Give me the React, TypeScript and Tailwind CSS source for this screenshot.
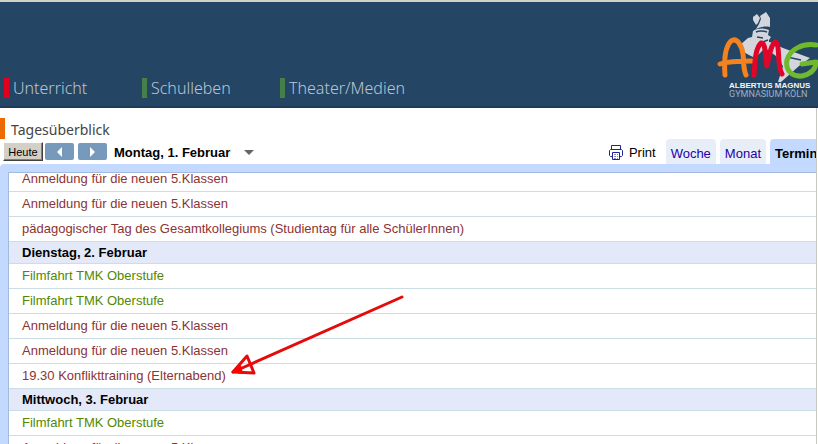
import React from 'react';

type CalendarEvent = {
  title: string;
  color: 'red' | 'green';
};

type Day = {
  label: string | null;
  events: CalendarEvent[];
};

const navItems = [
  { label: 'Unterricht', marker: 'bg-[#e2001f]' },
  { label: 'Schulleben', marker: 'bg-[#45804a]' },
  { label: 'Theater/Medien', marker: 'bg-[#45804a]' },
];

const days: Day[] = [
  {
    label: null,
    events: [
      { title: 'Anmeldung für die neuen 5.Klassen', color: 'red' },
      { title: 'Anmeldung für die neuen 5.Klassen', color: 'red' },
      {
        title: 'pädagogischer Tag des Gesamtkollegiums (Studientag für alle SchülerInnen)',
        color: 'red',
      },
    ],
  },
  {
    label: 'Dienstag, 2. Februar',
    events: [
      { title: 'Filmfahrt TMK Oberstufe', color: 'green' },
      { title: 'Filmfahrt TMK Oberstufe', color: 'green' },
      { title: 'Anmeldung für die neuen 5.Klassen', color: 'red' },
      { title: 'Anmeldung für die neuen 5.Klassen', color: 'red' },
      { title: '19.30 Konflikttraining (Elternabend)', color: 'red' },
    ],
  },
  {
    label: 'Mittwoch, 3. Februar',
    events: [
      { title: 'Filmfahrt TMK Oberstufe', color: 'green' },
      { title: 'Anmeldung für die neuen 5.Klassen', color: 'red' },
    ],
  },
];

const Logo: React.FC = () => (
  <svg width="102" height="94" viewBox="716 8 102 94" className="shrink-0" aria-label="AMG">
    <g fill="#d3d7dd">
      <path d="M753 17 L757 14 L760 18 L758 23 L756 25 L753 20 Z" />
      <path d="M760 16 L766 12 L770 18 L770 27 C765 26 760 27 756 29 L759 24 L761 19 Z" />
      <path d="M753 31 C758 28 764 28 769 30 L768 35 L771 37 L769 40 L769 44 L762 46 L754 48 L742 53 L740 45 L748 38 L752 37 Z" />
      <path d="M740 50 L755 44 L770 42 L783 48 L810 58 L799 66 L781 82 L778 82 L783 66 L776 56 L765 48 L755 58 L749 55 Z" />
    </g>
    <path
      d="M756 32 C760 30 764 31 767 32 M757 37 L763 38 M760 43 L768 40 M787 57 L801 60"
      stroke="#254564"
      strokeWidth="1.5"
      fill="none"
    />
    <g fill="none" strokeWidth="5" strokeLinecap="round" strokeLinejoin="round">
      <path
        d="M725 75 C724 62 725 47 731 41 C737 37 742 46 743 54 C744 62 743 68 746 75 M720 64 C729 61 742 61 752 61"
        stroke="#f58220"
      />
      <path
        d="M754 75 C755 62 755 49 761 43 C766 42 765 57 767 66 C769 57 771 43 776 42 C781 48 776 64 782 74"
        stroke="#e2052a"
      />
      <path
        d="M816 45 C803 43 790 49 787 60 C785 71 793 77 802 76 C811 74 816 69 816 62 L802 64"
        stroke="#6fba2c"
      />
    </g>
    <text x="729" y="88" fontSize="8" fontWeight="700" fill="#f4f6f8" fontFamily="Liberation Sans, sans-serif">
      ALBERTUS MAGNUS
    </text>
    <text x="729" y="97" fontSize="9" fill="#9fb0c2" fontFamily="Roboto, sans-serif">
      GYMNASIUM KÖLN
    </text>
  </svg>
);

const PrinterIcon: React.FC = () => (
  <svg width="14" height="15" viewBox="0 0 14 15" fill="none" aria-hidden="true">
    <path d="M2.5 4.5 V0.5 H11.5 V4.5" stroke="#23238e" />
    <path
      d="M3 11.5 H1.5 L0.5 10.5 V5.5 L1.5 4.5 H12.5 L13.5 5.5 V10.5 L12.5 11.5 H11"
      stroke="#23238e"
    />
    <path d="M3.5 7.5 H10.5 V14.5 H3.5 Z" fill="#fff" stroke="#23238e" />
    <path d="M5 9.5 H9 M5 11.5 H9 M5 13.5 H9" stroke="#8888c4" strokeDasharray="2 1" />
  </svg>
);

const Header: React.FC = () => (
  <header className="flex items-start justify-between overflow-hidden border-t-2 border-b-2 border-t-[#d4d0c8] border-b-[#1e3a58] bg-[#254564] pt-1.5 pb-1">
    <nav className="mt-[70px] flex pl-1">
      {navItems.map((item) => (
        <a
          key={item.label}
          href="#"
          className="flex w-[138px] items-center gap-1 font-['Noto_Sans'] text-base leading-5 font-light text-[#b9c6d4]"
        >
          <span className={`h-5 w-[5px] shrink-0 ${item.marker}`} />
          {item.label}
        </a>
      ))}
    </nav>
    <Logo />
  </header>
);

const Toolbar: React.FC = () => (
  <div className="flex h-[25px] items-start justify-between pl-[3px]">
    <div className="flex items-center pt-[3px]">
      <button className="h-[19px] w-10 border border-t-white border-r-[#404040] border-b-[#404040] border-l-white bg-[#d4d0c8] text-[11px] leading-4 text-black shadow-[inset_-1px_-1px_0_#808080]">
        Heute
      </button>
      <button
        aria-label="Zurück"
        className="ml-0.5 flex h-[17px] w-[29px] items-center justify-center rounded-xs bg-[#7799bb]"
      >
        <svg width="5" height="10" viewBox="0 0 5 10">
          <path d="M5 0 V10 L0 5 Z" fill="#fff" />
        </svg>
      </button>
      <button
        aria-label="Weiter"
        className="ml-1 flex h-[17px] w-[29px] items-center justify-center rounded-xs bg-[#7799bb]"
      >
        <svg width="5" height="10" viewBox="0 0 5 10">
          <path d="M0 0 V10 L5 5 Z" fill="#fff" />
        </svg>
      </button>
      <button className="ml-[7px] flex items-center gap-3.5 pt-0.5 text-[13px] leading-4 font-bold text-black">
        Montag, 1. Februar
        <svg width="10" height="5" viewBox="0 0 10 5">
          <path d="M0 0 H10 L5 5 Z" fill="#666" />
        </svg>
      </button>
    </div>
    <div className="flex h-full items-end text-[13px]">
      <button className="mr-2.5 flex h-[25px] items-center gap-1.5 pt-0.5 text-black">
        <PrinterIcon />
        Print
      </button>
      <button className="mr-1 h-[25px] rounded-t-sm bg-[#e8eef7] px-[5px] pt-1 text-[#2200aa]">
        Woche
      </button>
      <button className="mr-1 h-[25px] rounded-t-sm bg-[#e8eef7] px-[5px] pt-1 text-[#2200aa]">
        Monat
      </button>
      <button className="h-[25px] w-[46px] overflow-hidden rounded-tl-sm bg-[#c3d9ff] pt-1 pl-[5px] text-left font-bold whitespace-nowrap text-black">
        Termin
      </button>
    </div>
  </div>
);

const Agenda: React.FC = () => (
  <div className="rounded-tl-sm bg-[#c3d9ff] pt-2 pl-2">
    <div className="border-t border-l border-[#a2bbdd] bg-white text-[13px]">
      {days.map((day, index) => (
        <section key={index}>
          {day.label && (
            <h2 className="h-[22px] border-b border-[#ccdde6] bg-[#e3e9f8] pl-[13px] leading-[21px] font-bold text-black">
              {day.label}
            </h2>
          )}
          <ul className={day.label ? '' : '-mt-1.5'}>
            {day.events.map((event, i) => (
              <li
                key={i}
                className={`h-[25px] border-b border-[#ccdde6] pl-[13px] leading-6 whitespace-nowrap ${
                  event.color === 'red' ? 'text-[#8a3434]' : 'text-[#528800]'
                }`}
              >
                {event.title}
              </li>
            ))}
          </ul>
        </section>
      ))}
    </div>
  </div>
);

const Arrow: React.FC = () => (
  <svg
    width="174"
    height="84"
    viewBox="230 294 174 84"
    fill="none"
    stroke="#e30b0b"
    strokeLinecap="round"
    className="pointer-events-none absolute top-[294px] left-[230px]"
    aria-hidden="true"
  >
    <path d="M402 297 L233 372" strokeWidth="3" />
    <path d="M233 372 L247 356 L254 373 Z" strokeWidth="3" strokeLinejoin="round" />
    <path d="M232 372 L241 365 L243 374 Z" fill="#f00" stroke="none" />
  </svg>
);

export default function App() {
  return (
    <div className="relative h-screen overflow-hidden bg-white font-['Liberation_Sans',Arial,sans-serif]">
      <Header />
      <main className="mr-px border-r border-[#c8c8c0] pt-[10px]">
        <div className="flex h-[21px] items-start gap-1.5">
          <span className="h-[21px] w-[5px] bg-[#ec6a00]" />
          <h1 className="pt-1 font-['Noto_Sans'] text-sm leading-4 text-[#444]">Tagesüberblick</h1>
        </div>
        <Toolbar />
        <Agenda />
      </main>
      <Arrow />
    </div>
  );
}
